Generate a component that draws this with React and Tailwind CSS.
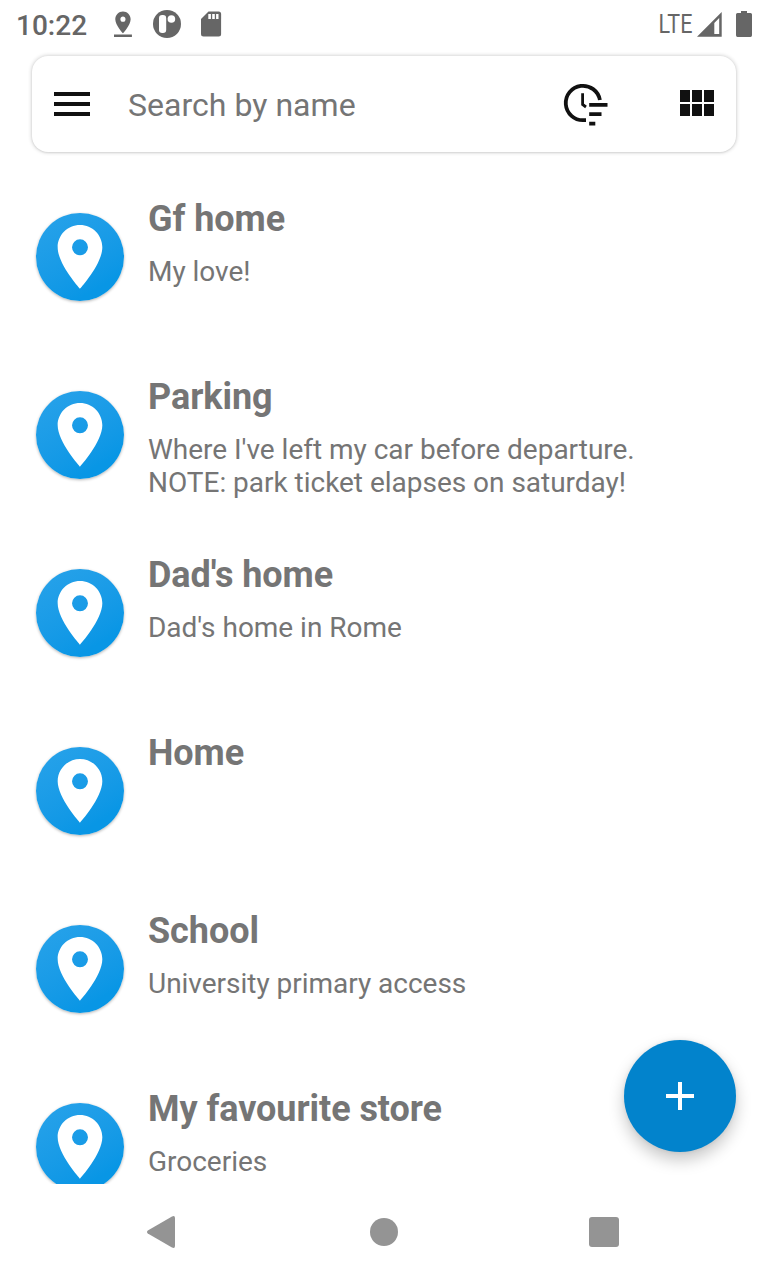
const places = [
  { name: "Gf home", note: ["My love!"] },
  {
    name: "Parking",
    note: ["Where I've left my car before departure.", "NOTE: park ticket elapses on saturday!"],
  },
  { name: "Dad's home", note: ["Dad's home in Rome"] },
  { name: "Home", note: [] },
  { name: "School", note: ["University primary access"] },
  { name: "My favourite store", note: ["Groceries"] },
];

function StatusBar() {
  return (
    <header className="flex h-12 shrink-0 items-center justify-between pl-4 pr-4 text-[#666666]">
      <div className="flex h-full items-center">
        <span className="w-[92px] pt-[3px] text-[28px] leading-[34px] font-medium">10:22</span>
        <svg width="120" height="48" viewBox="108 0 120 48" fill="currentColor" aria-hidden="true">
          <path
            transform="translate(107.6 8.9) scale(1.28)"
            d="M18 8c0-3.31-2.69-6-6-6S6 4.69 6 8c0 4.5 6 11 6 11s6-6.5 6-11zm-8 0c0-1.1.9-2 2-2s2 .9 2 2a2 2 0 1 1-4 0zM5 20v2h14v-2H5z"
          />
          <circle cx="167" cy="24" r="14" />
          <rect x="159" y="15" width="7.2" height="18" rx="3.2" fill="white" />
          <circle cx="171.4" cy="19" r="3.8" fill="white" />
          <path d="M208.5 11.5H218.6A2.5 2.5 0 0 1 221.1 14V34A2.5 2.5 0 0 1 218.6 36.5H203.5A2.5 2.5 0 0 1 201 34V19Z" />
          <path d="M208.3 14h2.6v5h-2.6zM212.2 14h2.6v5h-2.6zM216.1 14h2.4v5h-2.4z" fill="white" />
        </svg>
      </div>
      <svg width="94" height="48" viewBox="658 0 94 48" fill="currentColor" aria-hidden="true">
        <text x="658.6" y="33" fontSize="25" textLength="33.8" lengthAdjust="spacingAndGlyphs" className="font-['Roboto']">LTE</text>
        <path fillRule="evenodd" d="M697 36.8L721.7 12V36.8ZM714.3 23V34H719.2V18.1Z" />
        <path d="M741 11H747V13H750.5Q752 13 752 14.5V35.3Q752 37 750.5 37H737.5Q736 37 736 35.3V14.5Q736 13 737.5 13H741Z" />
      </svg>
    </header>
  );
}

function SearchBar() {
  return (
    <div className="mx-8 mt-2 flex h-24 shrink-0 items-center rounded-2xl bg-white pr-[22px] pl-[22px] text-[#111111] shadow-[0_0_4px_rgba(0,0,0,0.24),0_1px_2px_rgba(0,0,0,0.06)]">
      <button className="flex w-9 flex-col gap-1.5" aria-label="Menu">
        <span className="h-1 bg-current" />
        <span className="h-1 bg-current" />
        <span className="h-1 bg-current" />
      </button>
      <span className="ml-[38px] flex-1 pt-0.5 text-[32px] leading-[38px] tracking-[0.03px] text-[#757575]">Search by name</span>
      <button className="mr-[72px]" aria-label="Sort by time">
        <svg width="46" height="48" viewBox="562 80 46 48" fill="none" stroke="currentColor" strokeWidth="3.8">
          <path d="M586 120.2H583.5A17.2 17.2 0 1 1 599.9 100" />
          <path d="M582.6 93.3V104.5L586 107" strokeWidth="2.8" />
          <path d="M589.2 104.8H607.5M589.2 114.2H601.5M589.2 123.6H595.3" />
        </svg>
      </button>
      <button className="-mt-[2px] grid grid-cols-[10px_10px_10px] gap-0.5" aria-label="Grid view">
        <span className="h-3 bg-current" />
        <span className="h-3 bg-current" />
        <span className="h-3 bg-current" />
        <span className="h-3 bg-current" />
        <span className="h-3 bg-current" />
        <span className="h-3 bg-current" />
      </button>
    </div>
  );
}

function PlaceRow({ name, note }) {
  return (
    <li className="flex h-[178px] shrink-0 gap-6 pl-9">
      <div className="mt-[25px] size-[88px] shrink-0 rounded-full bg-linear-150 from-[#25a1e9] from-10% to-[#0896e5] to-80% shadow-[0_1px_3px_rgba(0,0,0,0.3)]">
        <svg width="88" height="88" viewBox="0 0 88 88" fill="white" aria-hidden="true">
          <path
            transform="translate(5.72 5.62) scale(3.19)"
            d="M12 2C8.13 2 5 5.13 5 9c0 5.25 7 13 7 13s7-7.75 7-13c0-3.87-3.13-7-7-7zm0 9.5a2.5 2.5 0 0 1 0-5 2.5 2.5 0 0 1 0 5z"
          />
        </svg>
      </div>
      <div className="pt-[10px] text-[#757575]">
        <h2 className="text-[36px] leading-[42px] font-bold tracking-[-0.06px]">{name}</h2>
        <div className="mt-[15px] text-[28px] leading-[33px] tracking-[-0.02px]">
          {note.map((line) => (
            <p key={line} className="whitespace-nowrap">{line}</p>
          ))}
        </div>
      </div>
    </li>
  );
}

function NavigationBar() {
  return (
    <nav className="flex h-24 shrink-0 items-center justify-between pr-[149px] pl-[147px] text-[#949494]">
      <svg width="29" height="34" viewBox="0 0 29 34" fill="currentColor" aria-hidden="true">
        <path d="M0.8 15.6L25 1.4Q28 0 28 3V31Q28 34 25 32.6L0.8 18.4Q-0.8 17 0.8 15.6Z" />
      </svg>
      <span className="ml-[2px] size-7 rounded-full bg-current" />
      <span className="size-[30px] rounded-[3px] bg-current" />
    </nav>
  );
}

export default function App() {
  return (
    <div className="flex h-[1280px] w-[768px] flex-col overflow-hidden bg-white font-['Roboto',sans-serif]">
      <StatusBar />
      <SearchBar />
      <main className="relative mt-9 min-h-0 flex-1 overflow-hidden">
        <ul className="flex flex-col">
          {places.map((place) => (
            <PlaceRow key={place.name} {...place} />
          ))}
        </ul>
        <button
          className="absolute right-8 bottom-8 flex size-28 items-center justify-center rounded-full bg-[#0283cc] text-white shadow-[0_8px_16px_rgba(0,0,0,0.22),0_0_4px_rgba(0,0,0,0.08)]"
          aria-label="Add place"
        >
          <svg width="28" height="28" viewBox="0 0 28 28" fill="currentColor">
            <path d="M12 0h4v12h12v4H16v12h-4V16H0v-4h12z" />
          </svg>
        </button>
      </main>
      <NavigationBar />
    </div>
  );
}
